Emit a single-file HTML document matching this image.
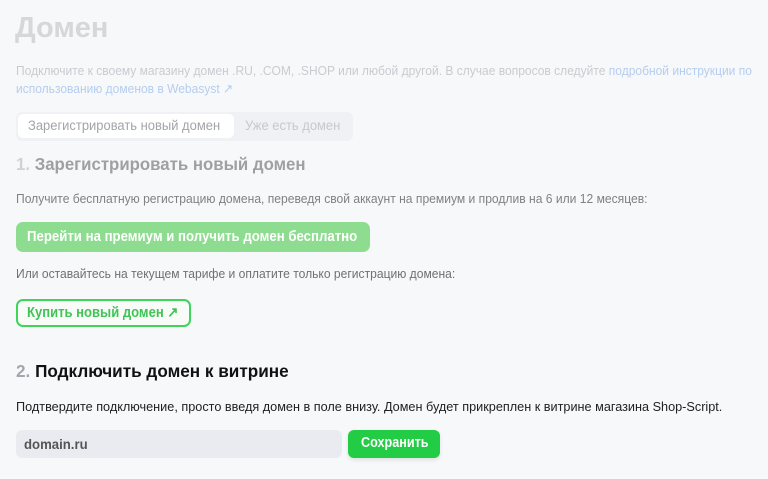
<!DOCTYPE html>
<html><head><meta charset="utf-8"><style>
*{margin:0;padding:0;box-sizing:border-box}
body{width:768px;height:479px;background:#f7f8fa;font-family:"Liberation Sans",sans-serif;color:#555;overflow:hidden;position:relative}
.a{position:absolute;white-space:nowrap;transform-origin:0 0}
.s{display:inline-block;transform-origin:0 0}
</style></head><body>
<div class="a" style="left:15px;top:12px;font-size:29px;font-weight:bold;color:#d6d7db">Домен</div>
<div class="a" style="left:16px;top:62px;font-size:13px;color:#c9cbd1;line-height:18px;transform:scaleX(.925)">Подключите к своему магазину домен .RU, .COM, .SHOP или любой другой. В случае вопросов следуйте <span style="color:#b5cdef">подробной инструкции по</span><br><span style="color:#b5cdef">использованию доменов в Webasyst ↗</span></div>
<div class="a" style="left:16px;top:112px;width:337px;height:29px;background:#f0f1f4;border-radius:6px"></div>
<div class="a" style="left:18px;top:114px;width:216px;height:24px;background:#fff;border-radius:5px"></div>
<div class="a" style="left:28px;top:118px;font-size:13.5px;color:#a3a4a8;transform:scaleX(.96)">Зарегистрировать новый домен</div>
<div class="a" style="left:245px;top:118px;font-size:13.5px;color:#c7c8cc;transform:scaleX(.96)">Уже есть домен</div>
<div class="a" style="left:16px;top:154px;font-size:17.5px;font-weight:bold;color:#a0a0a4;transform:scaleX(.96)"><span style="color:#d0d1d6">1.</span> Зарегистрировать новый домен</div>
<div class="a" style="left:16px;top:191px;font-size:13px;color:#808184;transform:scaleX(.93)">Получите бесплатную регистрацию домена, переведя свой аккаунт на премиум и продлив на 6 или 12 месяцев:</div>
<div class="a" style="left:16px;top:222px;width:354px;height:30px;background:#8ddc8f;border-radius:7px;color:#fff;font-size:15px;font-weight:bold;padding:6px 0 0 11px"><span class="s" style="transform:scaleX(.88)">Перейти на премиум и получить домен бесплатно</span></div>
<div class="a" style="left:16px;top:266px;font-size:13px;color:#707174;transform:scaleX(.93)">Или оставайтесь на текущем тарифе и оплатите только регистрацию домена:</div>
<div class="a" style="left:16px;top:299px;width:175px;height:28px;border:2px solid #3fd45a;border-radius:7px;color:#3fc455;font-size:14.5px;font-weight:bold;padding:4px 0 0 9px;background:#f8fbf8"><span class="s" style="transform:scaleX(.9)">Купить новый домен ↗</span></div>
<div class="a" style="left:16px;top:361px;font-size:17.5px;font-weight:bold;color:#111;transform:scaleX(.98)"><span style="color:#a4a6ad">2.</span> Подключить домен к витрине</div>
<div class="a" style="left:16px;top:399px;font-size:13px;color:#222;transform:scaleX(.975)">Подтвердите подключение, просто введя домен в поле внизу. Домен будет прикреплен к витрине магазина Shop-Script.</div>
<div class="a" style="left:16px;top:430px;width:326px;height:28px;background:#e9ebf0;border-radius:6px;font-size:14px;font-weight:bold;color:#555;padding:6px 0 0 8px"><span class="s" style="transform:scaleX(.94)">domain.ru</span></div>
<div class="a" style="left:348px;top:430px;width:92px;height:28px;background:#22cc44;border-radius:6px;color:#fff;font-size:14.5px;font-weight:bold;padding:5px 0 0 13px;box-shadow:0 2px 4px rgba(0,0,0,.1)"><span class="s" style="transform:scaleX(.87)">Сохранить</span></div>
</body></html>
